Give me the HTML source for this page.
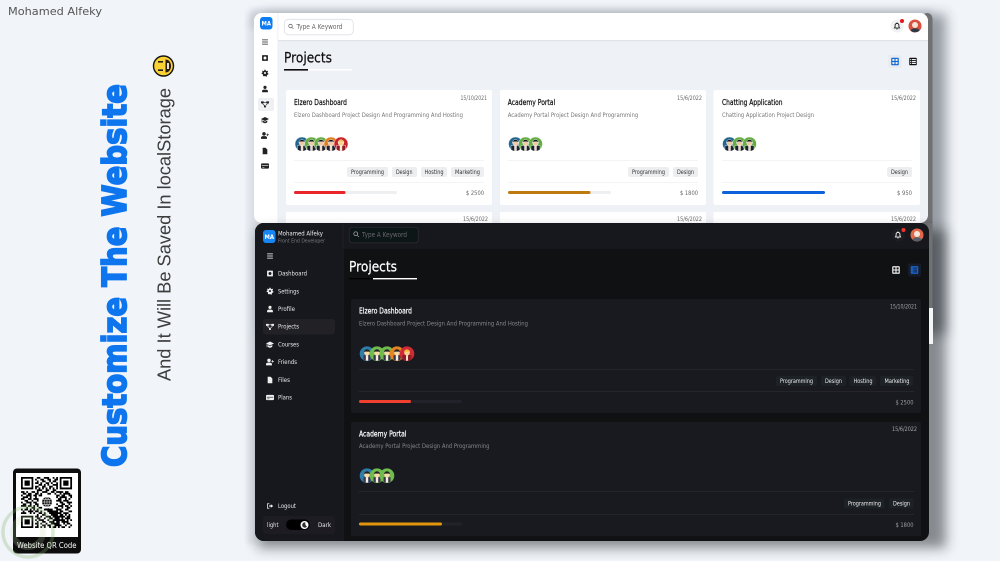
<!DOCTYPE html>
<html lang="en">
<head>
<meta charset="utf-8">
<title>Customize The Website</title>
<style>
html,body{margin:0;padding:0;background:#f1f4f9;width:1000px;height:561px;overflow:hidden}
svg{display:block;font-family:"DejaVu Sans","Liberation Sans",sans-serif}
.b{font-weight:bold}
.s{stroke-width:.22px}
</style>
</head>
<body>
<svg width="1000" height="561" viewBox="0 0 1000 561" xmlns="http://www.w3.org/2000/svg">
<defs>
<filter id="s1" x="-20%" y="-20%" width="140%" height="140%"><feGaussianBlur stdDeviation="6"/></filter>
<filter id="s2" x="-20%" y="-20%" width="140%" height="140%"><feGaussianBlur stdDeviation="3"/></filter>
<filter id="soft" x="-2%" y="-2%" width="104%" height="104%"><feGaussianBlur stdDeviation="0.3"/></filter>
<clipPath id="av"><circle cx="0" cy="0" r="7"/></clipPath>
<clipPath id="lw"><rect x="254" y="13" width="674" height="210" rx="8"/></clipPath>
<clipPath id="dw"><rect x="255" y="223" width="674" height="318" rx="9"/></clipPath>
<symbol id="i-bars" viewBox="0 0 12 12"><path d="M1 1.800h10v1.300H1zM1 5.350h10v1.300H1zM1 8.900h10v1.300H1z"/></symbol>
<symbol id="i-dash" viewBox="0 0 12 12"><path fill-rule="evenodd" d="M2 1h8a1 1 0 0 1 1 1v8a1 1 0 0 1-1 1H2a1 1 0 0 1-1-1V2a1 1 0 0 1 1-1zM6 3.500a2.500 2.500 0 1 0 0 5 2.500 2.500 0 0 0 0-5z"/></symbol>
<symbol id="i-gear" viewBox="0 0 12 12"><path fill-rule="evenodd" d="M5 .5h2l.3 1.600 1.400.6L10 1.900l1.200 1.600-1 1.300.3 1.400 1.400.6-.4 2-1.600.1-.8 1.200.6 1.500-1.800 1-1.100-1.200H5.200L4.100 11.700l-1.800-1 .6-1.500-.8-1.200L.5 7.900l-.4-2 1.400-.6.3-1.400-1-1.300L2 1.900l1.300.8 1.400-.6zM6 4.300a1.700 1.700 0 1 0 0 3.400 1.700 1.700 0 0 0 0-3.400z"/></symbol>
<symbol id="i-user" viewBox="0 0 12 12"><circle cx="6" cy="3.200" r="2.700"/><path d="M1 11.500V9.600C1 8 2.500 7 4 7h4c1.500 0 3 1 3 2.600v1.900z"/></symbol>
<symbol id="i-proj" viewBox="0 0 12 12"><path d="M0 2h4v3H0zM8 2h4v3H8zM4.500 8h3v3h-3zM4 3h4v1H4zM2.500 5l3.500 3.500-.8.5L1.700 5.500zM9.500 5L6 8.500l.8.5 3.500-3.500z"/></symbol>
<symbol id="i-cap" viewBox="0 0 12 12"><path d="M6 1.500L12 4.500 6 7.500 0 4.500zM2.500 6.800L6 8.600l3.500-1.800v2.400C8.500 10.300 7.300 10.800 6 10.800s-2.500-.5-3.500-1.600zM1 5.500h.8V10H1z"/></symbol>
<symbol id="i-plus" viewBox="0 0 12 12"><circle cx="4.500" cy="3.500" r="2.600"/><path d="M0 11V9.500C0 8 1.300 7 2.700 7h3.600C7.700 7 9 8 9 9.500V11zM9.500 3h1v1.500H12v1h-1.500V7h-1V5.500H8v-1h1.500z"/></symbol>
<symbol id="i-file" viewBox="0 0 12 12"><path d="M2 .5h5l3 3v8H2z"/></symbol>
<symbol id="i-card" viewBox="0 0 12 12"><path fill-rule="evenodd" d="M1.500 2h9A1.500 1.500 0 0 1 12 3.500v5A1.500 1.500 0 0 1 10.500 10h-9A1.500 1.500 0 0 1 0 8.500v-5A1.500 1.500 0 0 1 1.500 2zM1 5v1h10V5zM2 7.600v.9h3v-.9z"/></symbol>
<symbol id="i-out" viewBox="0 0 12 12"><path d="M1 1.500h4v1.300H2.300v6.400H5v1.300H1zM7.500 3L11.500 6l-4 3V7H4.500V5h3z"/></symbol>
<symbol id="i-bell" viewBox="0 0 12 12"><path fill="none" stroke="currentColor" stroke-width="1.300" d="M2.200 9h7.600L8.900 7.500V5A2.900 2.900 0 0 0 3.100 5v2.500z"/><path d="M4.800 10h2.400a1.200 1.200 0 0 1-2.400 0zM5.500.5h1V2h-1z"/></symbol>
<symbol id="i-grid" viewBox="0 0 12 12"><path fill-rule="evenodd" d="M2 1h8a1 1 0 0 1 1 1v8a1 1 0 0 1-1 1H2a1 1 0 0 1-1-1V2a1 1 0 0 1 1-1zM2.500 2.500v2.800h2.800V2.500zM6.700 2.500v2.800h2.800V2.500zM2.500 6.700v2.800h2.800V6.700zM6.700 6.700v2.800h2.800V6.700z"/></symbol>
<symbol id="i-list" viewBox="0 0 12 12"><path fill-rule="evenodd" d="M2 1h8a1 1 0 0 1 1 1v8a1 1 0 0 1-1 1H2a1 1 0 0 1-1-1V2a1 1 0 0 1 1-1zM2.200 2.600v1.500h1.100V2.600zM4.300 2.600v1.500h5.500V2.600zM2.200 5.250v1.500h1.100v-1.500zM4.300 5.250v1.500h5.500v-1.500zM2.200 7.900v1.500h1.100V7.900zM4.300 7.900v1.500h5.500V7.900z"/></symbol>
<symbol id="i-search" viewBox="0 0 12 12"><circle cx="5" cy="5" r="3.500" fill="none" stroke="currentColor" stroke-width="1.300"/><path d="M7.500 8.300l.8-.8 3 3-.8.8z"/></symbol>
<g id="p" clip-path="url(#av)"><rect x="-4.500" y="1.500" width="9" height="6" fill="#1f2230"/><rect x="-1" y="1.500" width="2" height="6" fill="#f1d9c4"/><circle cx="0" cy="-1" r="2.800" fill="#f3c9a5"/><path d="M-3.200-1.200a3.200 3.200 0 0 1 6.400 0l-1.200-1H-2z" fill="#14141c"/></g>
<g id="pd" clip-path="url(#av)"><rect x="-3.500" y="1.500" width="7" height="6" fill="#3b3648"/><rect x="-1.200" y="1.500" width="2.400" height="6" fill="#f5efe6"/><circle cx="0" cy="-1" r="2.800" fill="#f7d9a8"/><path d="M-3-1.500a3 3 0 0 1 6 0l-1-.6H-2z" fill="#222"/></g>
<g id="pr" clip-path="url(#av)"><rect x="-4.500" y="1.500" width="9" height="6" fill="#8e1a22"/><rect x="-1" y="1.500" width="2" height="6" fill="#f5e5d5"/><circle cx="0" cy="-1" r="2.800" fill="#f7d38f"/><path d="M-3-1.300a3 3 0 0 1 6 0l-1-.8H-2z" fill="#f0b93a"/></g>
</defs>

<rect width="1000" height="561" fill="#f1f4f9"/>

<!-- left captions -->
<g filter="url(#soft)">
<text x="8" y="15" font-size="11" fill="#555" textLength="94" lengthAdjust="spacingAndGlyphs">Mohamed Alfeky</text>
<g transform="translate(126,467) rotate(-90)"><text x="0" y="0" font-size="33" class="b" fill="#0d74ee" stroke="#0d74ee" stroke-width="1.700" textLength="383" lengthAdjust="spacingAndGlyphs">Customize The Website</text></g>
<g transform="translate(170.500,381) rotate(-90)"><text x="0" y="0" font-size="18" fill="#3c3c3c" font-family="Liberation Sans, sans-serif" textLength="293" lengthAdjust="spacingAndGlyphs">And It Will Be Saved In localStorage</text></g>
</g>
<!-- emoji -->
<circle cx="163.500" cy="66" r="10" fill="#fbd234" stroke="#111" stroke-width="1.400"/>
<path d="M158 61h5v1.600h-5zM158 69.400h5v1.600h-5z" fill="#222"/>
<path d="M165.500 59.500c3.500 0 5.500 3 5.500 6.500s-2 6.500-5.500 6.500z" fill="#2a1a14"/>
<path d="M167 63h2v6h-2z" fill="#e8e0d0"/>

<!-- QR -->
<g filter="url(#soft)">
<rect x="13" y="468.500" width="68" height="85" rx="4" fill="#0b0b0d"/>
<rect x="16" y="473" width="62" height="64" fill="#fff"/>
<g transform="translate(21,477) scale(1.760)" fill="none" stroke="#000" stroke-width="1">
<path d="M0 .5h7M9 .5h2M13 .5h3M18 .5h1M20 .5h1M22 .5h7
M0 1.500h1M6 1.500h1M8 1.500h1M11 1.500h2M15 1.500h2M19 1.500h2M22 1.500h1M28 1.500h1
M0 2.500h1M2 2.500h3M6 2.500h1M9 2.500h1M12 2.500h2M16 2.500h1M18 2.500h2M22 2.500h1M24 2.500h3M28 2.500h1
M0 3.500h1M2 3.500h3M6 3.500h1M8 3.500h2M11 3.500h1M14 3.500h2M17 3.500h1M20 3.500h1M22 3.500h1M24 3.500h3M28 3.500h1
M0 4.500h1M2 4.500h3M6 4.500h1M10 4.500h2M13 4.500h1M15 4.500h1M18 4.500h3M22 4.500h1M24 4.500h3M28 4.500h1
M0 5.500h1M6 5.500h1M8 5.500h2M12 5.500h2M16 5.500h2M20 5.500h1M22 5.500h1M28 5.500h1
M0 6.500h7M8 6.500h1M10 6.500h1M12 6.500h1M14 6.500h1M16 6.500h1M18 6.500h1M20 6.500h1M22 6.500h7
M9 7.500h3M14 7.500h2M18 7.500h2
M0 8.500h2M3 8.500h1M6 8.500h2M9 8.500h1M12 8.500h3M17 8.500h2M20 8.500h4M25 8.500h2
M1 9.500h2M4 9.500h2M8 9.500h2M11 9.500h1M15 9.500h2M19 9.500h1M22 9.500h1M24 9.500h4
M0 10.500h1M3 10.500h3M7 10.500h2M10 10.500h2M20 10.500h2M23 10.500h2M27 10.500h2
M1 11.500h3M5 11.500h1M8 11.500h1M20 11.500h1M22 11.500h4M28 11.500h1
M0 12.500h2M4 12.500h2M7 12.500h3M21 12.500h2M25 12.500h1M27 12.500h1
M2 13.500h2M6 13.500h1M9 13.500h1M20 13.500h3M24 13.500h3
M0 14.500h1M3 14.500h3M7 14.500h2M22 14.500h2M26 14.500h3
M1 15.500h2M5 15.500h1M8 15.500h2M20 15.500h1M23 15.500h2M27 15.500h1
M0 16.500h3M4 16.500h2M7 16.500h1M9 16.500h1M21 16.500h3M25 16.500h2M28 16.500h1
M3 17.500h1M6 17.500h2M10 17.500h2M14 17.500h2M19 17.500h2M23 17.500h1M26 17.500h2
M0 18.500h1M2 18.500h2M5 18.500h1M7 18.500h1M9 18.500h1M13 18.500h5M20 18.500h3M25 18.500h2
M1 19.500h1M4 19.500h3M8 19.500h2M11 19.500h1M15 19.500h6M22 19.500h2M27 19.500h2
M0 20.500h3M5 20.500h1M7 20.500h1M10 20.500h2M13 20.500h1M16 20.500h7M24 20.500h3
M9 21.500h1M12 21.500h2M17 21.500h4M22 21.500h2M25 21.500h1M27 21.500h1
M0 22.500h7M8 22.500h2M11 22.500h1M14 22.500h3M18 22.500h7M26 22.500h2
M0 23.500h1M6 23.500h1M9 23.500h2M13 23.500h1M16 23.500h2M19 23.500h3M23 23.500h1M25 23.500h3
M0 24.500h1M2 24.500h3M6 24.500h1M8 24.500h1M10 24.500h3M15 24.500h1M18 24.500h7M26 24.500h1M28 24.500h1
M0 25.500h1M2 25.500h3M6 25.500h1M9 25.500h1M12 25.500h2M16 25.500h3M20 25.500h2M23 25.500h4
M0 26.500h1M2 26.500h3M6 26.500h1M8 26.500h2M11 26.500h1M14 26.500h1M17 26.500h5M24 26.500h1M26 26.500h2
M0 27.500h1M6 27.500h1M9 27.500h1M12 27.500h2M15 27.500h2M19 27.500h4M25 27.500h1M28 27.500h1
M0 28.500h7M8 28.500h2M11 28.500h1M13 28.500h1M16 28.500h1M18 28.500h2M21 28.500h1M23 28.500h2M27 28.500h1"/>
</g>
<circle cx="47" cy="502" r="6.500" fill="#fff"/>
<circle cx="47" cy="502" r="5" fill="#111"/>
<path d="M42 502h10M47 497v10M43 499.500h8M43 504.500h8" stroke="#fff" stroke-width=".5" fill="none"/>
<ellipse cx="47" cy="502" rx="2.300" ry="5" stroke="#fff" stroke-width=".5" fill="none"/>
<text x="17" y="548" font-size="7.500" fill="#fff" textLength="59.500" lengthAdjust="spacingAndGlyphs">Website QR Code</text>
</g>
<!-- watermark ring -->
<circle cx="28" cy="532" r="25" fill="none" stroke="#7fb069" stroke-width="3.500" opacity=".28"/>
<circle cx="28" cy="532" r="15" fill="none" stroke="#bcd8a8" stroke-width="6" opacity=".2"/>

<!-- LIGHT WINDOW shadow -->
<rect x="262" y="14" width="684" height="320" fill="#27303a" opacity=".45" filter="url(#s1)"/>
<rect x="250" y="9" width="682" height="20" fill="#99a3ad" opacity=".3" filter="url(#s2)"/>
<rect x="247" y="14" width="12" height="530" fill="#a9b2bb" opacity=".25" filter="url(#s2)"/>
<!-- scrollbar strip -->
<rect x="922" y="13" width="10.500" height="295" rx="6" fill="#6f7173"/>

<g clip-path="url(#lw)">
<rect x="254" y="13" width="674" height="210" fill="#eef1f6"/>
<rect x="254" y="13" width="24" height="210" fill="#fff"/>
<rect x="254" y="13" width="674" height="27" fill="#fff"/>
<rect x="278" y="40" width="650" height="1.200" fill="#dfe2e6"/>
<rect x="277.500" y="13" width=".8" height="210" fill="#e9ecf0"/>
</g>

<g filter="url(#soft)">
<rect x="260" y="17" width="12.500" height="12.500" rx="3" fill="#0d7cf2"/>
<text x="261.500" y="25.500" font-size="6" class="b" fill="#fff" textLength="9.500" lengthAdjust="spacingAndGlyphs">MA</text>
<rect x="284.300" y="19.300" width="69" height="15.500" rx="4" fill="#fff" stroke="#dcdfe3" stroke-width=".8"/>
<use href="#i-search" x="288" y="23.500" width="6" height="6" fill="#555" color="#555"/>
<text x="296.500" y="29" font-size="7" fill="#666" textLength="46" lengthAdjust="spacingAndGlyphs">Type A Keyword</text>

<rect x="258" y="98" width="16" height="13" rx="2" fill="#eef0f3"/>
<g fill="#222" color="#222">
<use href="#i-bars" x="261.500" y="38.500" width="7" height="7"/>
<use href="#i-dash" x="261.500" y="54.500" width="7" height="7"/>
<use href="#i-gear" x="261.500" y="69.500" width="7" height="7"/>
<use href="#i-user" x="261.500" y="85.500" width="7" height="7"/>
<use href="#i-proj" x="261" y="100" width="8" height="8"/>
<use href="#i-cap" x="261" y="116" width="8" height="8"/>
<use href="#i-plus" x="261" y="131.500" width="8" height="8"/>
<use href="#i-file" x="261.500" y="147.500" width="7" height="7"/>
<use href="#i-card" x="261" y="162" width="8" height="8"/>
</g>

<text x="284" y="62.500" font-size="14.500" fill="#111" stroke="#111" class="s" textLength="48" lengthAdjust="spacingAndGlyphs">Projects</text>
<rect x="284" y="69" width="24" height="1.600" fill="#111"/>
<rect x="308" y="69" width="44" height="1.600" fill="#fff"/>

<circle cx="897" cy="26" r="6.500" fill="#f0f1f2"/>
<use href="#i-bell" x="893" y="22" width="8" height="8" fill="#111" color="#111"/>
<circle cx="902" cy="21" r="2" fill="#e8141c"/>
<circle cx="915" cy="26" r="6.500" fill="#d9503f"/>
<circle cx="915" cy="25" r="3" fill="#f6e3d4"/>
<path d="M910.500 30.500a5 4 0 0 1 9 0a6.500 6.500 0 0 1-9 0z" fill="#2b3a44"/>

<rect x="888.500" y="55" width="13" height="13" rx="2" fill="#e7ebf2"/>
<use href="#i-grid" x="890.500" y="57" width="9" height="9" fill="#0b63ce"/>
<use href="#i-list" x="908.500" y="57" width="9" height="9" fill="#111"/>

<!-- light cards row 1 -->
<g fill="#fff">
<rect x="286" y="90" width="206" height="115" rx="2"/>
<rect x="500" y="90" width="206" height="115" rx="2"/>
<rect x="713.500" y="90" width="206.500" height="115" rx="2"/>
<rect x="286" y="212" width="206" height="11"/>
<rect x="500" y="212" width="206" height="11"/>
<rect x="713.500" y="212" width="206.500" height="11"/>
</g>
<g font-size="5.800" fill="#666">
<text x="460.500" y="100" textLength="26.500" lengthAdjust="spacingAndGlyphs">15/10/2021</text>
<text x="677" y="100" textLength="25" lengthAdjust="spacingAndGlyphs">15/6/2022</text>
<text x="891" y="100" textLength="25" lengthAdjust="spacingAndGlyphs">15/6/2022</text>
<text x="463" y="221" textLength="25" lengthAdjust="spacingAndGlyphs">15/6/2022</text>
<text x="677" y="221" textLength="25" lengthAdjust="spacingAndGlyphs">15/6/2022</text>
<text x="891" y="221" textLength="25" lengthAdjust="spacingAndGlyphs">15/6/2022</text>
</g>
<g font-size="7.500" fill="#111" stroke="#111" class="s">
<text x="294" y="105" textLength="53" lengthAdjust="spacingAndGlyphs">Elzero Dashboard</text>
<text x="507.700" y="105" textLength="47.500" lengthAdjust="spacingAndGlyphs">Academy Portal</text>
<text x="722" y="105" textLength="60.500" lengthAdjust="spacingAndGlyphs">Chatting Application</text>
</g>
<g font-size="6.200" fill="#777">
<text x="294" y="117" textLength="169" lengthAdjust="spacingAndGlyphs">Elzero Dashboard Project Design And Programming And Hosting</text>
<text x="507.700" y="117" textLength="130.500" lengthAdjust="spacingAndGlyphs">Academy Portal Project Design And Programming</text>
<text x="722" y="117" textLength="92" lengthAdjust="spacingAndGlyphs">Chatting Application Project Design</text>
</g>
<!-- light avatars -->
<g stroke="#fff" stroke-width=".4">
<circle cx="302" cy="144" r="7" fill="#24668f"/><use href="#p" x="302" y="144"/>
<circle cx="311.500" cy="144" r="7" fill="#63ad43"/><use href="#p" x="311.500" y="144"/>
<circle cx="321" cy="144" r="7" fill="#63ad43"/><use href="#p" x="321" y="144"/>
<circle cx="331" cy="144" r="7" fill="#e27d20"/><use href="#p" x="331" y="144"/>
<circle cx="341" cy="144" r="7" fill="#c8232c"/><use href="#pr" x="341" y="144"/>
<circle cx="515.500" cy="144" r="7" fill="#24668f"/><use href="#p" x="515.500" y="144"/>
<circle cx="525.500" cy="144" r="7" fill="#63ad43"/><use href="#p" x="525.500" y="144"/>
<circle cx="535.500" cy="144" r="7" fill="#63ad43"/><use href="#p" x="535.500" y="144"/>
<circle cx="729.500" cy="144" r="7" fill="#24668f"/><use href="#p" x="729.500" y="144"/>
<circle cx="739.500" cy="144" r="7" fill="#63ad43"/><use href="#p" x="739.500" y="144"/>
<circle cx="749.500" cy="144" r="7" fill="#63ad43"/><use href="#p" x="749.500" y="144"/>
</g>
<g fill="#eef0f2">
<rect x="294" y="160" width="190" height=".7"/><rect x="294" y="182" width="190" height=".7"/>
<rect x="508" y="160" width="190" height=".7"/><rect x="508" y="182" width="190" height=".7"/>
<rect x="722" y="160" width="190" height=".7"/><rect x="722" y="182" width="190" height=".7"/>
</g>
<g fill="#eceef0">
<rect x="347" y="167" width="41" height="10" rx="2"/><rect x="392" y="167" width="25" height="10" rx="2"/><rect x="421" y="167" width="26" height="10" rx="2"/><rect x="451" y="167" width="33" height="10" rx="2"/>
<rect x="628" y="167" width="41" height="10" rx="2"/><rect x="673" y="167" width="25" height="10" rx="2"/>
<rect x="887" y="167" width="25" height="10" rx="2"/>
</g>
<g font-size="5.800" fill="#333">
<text x="351" y="174" textLength="33" lengthAdjust="spacingAndGlyphs">Programming</text>
<text x="396" y="174" textLength="16.500" lengthAdjust="spacingAndGlyphs">Design</text>
<text x="424.500" y="174" textLength="19" lengthAdjust="spacingAndGlyphs">Hosting</text>
<text x="455" y="174" textLength="25" lengthAdjust="spacingAndGlyphs">Marketing</text>
<text x="632" y="174" textLength="33" lengthAdjust="spacingAndGlyphs">Programming</text>
<text x="677" y="174" textLength="17" lengthAdjust="spacingAndGlyphs">Design</text>
<text x="891" y="174" textLength="17" lengthAdjust="spacingAndGlyphs">Design</text>
</g>
<g fill="#eeeff1">
<rect x="294" y="191" width="103" height="3" rx="1.500"/>
<rect x="508" y="191" width="103" height="3" rx="1.500"/>
<rect x="722" y="191" width="103" height="3" rx="1.500"/>
</g>
<rect x="294" y="191" width="51.500" height="3" rx="1.500" fill="#e8262c"/>
<rect x="508" y="191" width="82.500" height="3" rx="1.500" fill="#bf7a0e"/>
<rect x="722" y="191" width="103" height="3" rx="1.500" fill="#0c62dc"/>
<g font-size="6.500" fill="#666">
<text x="466" y="195" textLength="18" lengthAdjust="spacingAndGlyphs">$ 2500</text>
<text x="680" y="195" textLength="18" lengthAdjust="spacingAndGlyphs">$ 1800</text>
<text x="897" y="195" textLength="15" lengthAdjust="spacingAndGlyphs">$ 950</text>
</g>
</g>

<!-- DARK WINDOW shadow -->
<rect x="258" y="230" width="688" height="318" fill="#1a2128" opacity=".5" filter="url(#s1)"/>
<rect x="927.500" y="223" width="5" height="85" fill="#6f7173"/>
<rect x="928" y="308" width="5" height="36" fill="#f4f5f6"/>

<g clip-path="url(#dw)">
<rect x="255" y="223" width="674" height="318" fill="#101113"/>
<rect x="255" y="223" width="88" height="318" fill="#17181d"/>
<rect x="255" y="223" width="674" height="26" fill="#17181d"/>
<rect x="342.700" y="223" width=".7" height="318" fill="#23242a"/>
<rect x="351" y="299" width="570" height="114" rx="2" fill="#191a20"/>
<rect x="351" y="422" width="570" height="114" rx="2" fill="#191a20"/>
</g>

<g filter="url(#soft)">
<rect x="263" y="230" width="12.500" height="13" rx="3" fill="#1886f5"/>
<text x="264.500" y="239" font-size="6" class="b" fill="#fff" textLength="9.500" lengthAdjust="spacingAndGlyphs">MA</text>
<text x="278" y="235.500" font-size="6.500" fill="#eee" textLength="45" lengthAdjust="spacingAndGlyphs">Mohamed Alfeky</text>
<text x="278" y="242.500" font-size="5.500" fill="#787a80" textLength="47" lengthAdjust="spacingAndGlyphs">Front End Developer</text>
<rect x="349.300" y="227.300" width="69" height="15.500" rx="3" fill="#111214" stroke="#2a2b31" stroke-width=".8"/>
<use href="#i-search" x="353" y="231" width="6.500" height="6.500" fill="#bbb" color="#bbb"/>
<text x="362" y="237" font-size="7" fill="#666a70" textLength="45" lengthAdjust="spacingAndGlyphs">Type A Keyword</text>

<use href="#i-bars" x="266.500" y="252.500" width="7" height="7" fill="#fff"/>
<rect x="263" y="319" width="72" height="15.500" rx="3" fill="#212228"/>
<g fill="#eee">
<use href="#i-dash" x="266.500" y="270" width="7" height="7"/>
<use href="#i-gear" x="266.500" y="287.500" width="7" height="7"/>
<use href="#i-user" x="266.500" y="305.500" width="7" height="7"/>
<use href="#i-proj" x="266" y="322.500" width="8" height="8"/>
<use href="#i-cap" x="266" y="340.500" width="8" height="8"/>
<use href="#i-plus" x="266" y="358" width="8" height="8"/>
<use href="#i-file" x="266.500" y="376.500" width="7" height="7"/>
<use href="#i-card" x="266" y="393.500" width="8" height="8"/>
<use href="#i-out" x="266.500" y="502.500" width="7" height="7"/>
</g>
<g font-size="6" fill="#e8e8ea">
<text x="278" y="275.700" textLength="29" lengthAdjust="spacingAndGlyphs">Dashboard</text>
<text x="278" y="293.300" textLength="21" lengthAdjust="spacingAndGlyphs">Settings</text>
<text x="278" y="311" textLength="17" lengthAdjust="spacingAndGlyphs">Profile</text>
<text x="278" y="328.700" textLength="21" lengthAdjust="spacingAndGlyphs">Projects</text>
<text x="278" y="346.500" textLength="21" lengthAdjust="spacingAndGlyphs">Courses</text>
<text x="278" y="364" textLength="19" lengthAdjust="spacingAndGlyphs">Friends</text>
<text x="278" y="382" textLength="12" lengthAdjust="spacingAndGlyphs">Files</text>
<text x="278" y="399.700" textLength="14" lengthAdjust="spacingAndGlyphs">Plans</text>
<text x="278" y="508" textLength="18" lengthAdjust="spacingAndGlyphs">Logout</text>
</g>
<rect x="263" y="516" width="72" height="18" rx="3" fill="#1d1e23"/>
<text x="267" y="527" font-size="6" fill="#e8e8ea" textLength="11.500" lengthAdjust="spacingAndGlyphs">light</text>
<text x="318" y="527" font-size="6" fill="#e8e8ea" textLength="13" lengthAdjust="spacingAndGlyphs">Dark</text>
<rect x="286" y="519.500" width="24" height="10.500" rx="5.200" fill="#000"/>
<circle cx="304.500" cy="525" r="4" fill="#fff"/>
<path d="M305.500 522.500a2.600 2.600 0 1 0 1.500 3.900 3 3 0 0 1-1.500-3.900z" fill="#333"/>

<text x="349" y="271.500" font-size="14.500" fill="#fff" stroke="#fff" class="s" textLength="48" lengthAdjust="spacingAndGlyphs">Projects</text>
<rect x="349" y="278" width="24" height="1.400" fill="#000"/>
<rect x="373" y="278" width="44" height="1.400" fill="#fff"/>

<circle cx="898" cy="235" r="6.500" fill="#1d1e23"/>
<use href="#i-bell" x="894" y="231" width="8" height="8" fill="#fff" color="#fff"/>
<circle cx="903.500" cy="230" r="2" fill="#f0342e"/>
<circle cx="917" cy="235" r="6.500" fill="#e2684e"/>
<circle cx="917" cy="234" r="3" fill="#f8e6d8"/>
<path d="M912.500 239.500a5 4 0 0 1 9 0a6.500 6.500 0 0 1-9 0z" fill="#51606a"/>

<use href="#i-grid" x="891.500" y="265.500" width="9" height="9" fill="#fff"/>
<rect x="908" y="263.500" width="13" height="13" rx="2" fill="#191d29"/>
<use href="#i-list" x="910" y="265.500" width="9" height="9" fill="#1a6fe8"/>

<g font-size="6" fill="#a5a6aa">
<text x="890" y="308.700" textLength="27" lengthAdjust="spacingAndGlyphs">15/10/2021</text>
<text x="892" y="431" textLength="25" lengthAdjust="spacingAndGlyphs">15/6/2022</text>
</g>
<g font-size="7.500" fill="#fff" stroke="#fff" class="s">
<text x="359" y="313.700" textLength="53" lengthAdjust="spacingAndGlyphs">Elzero Dashboard</text>
<text x="359" y="436.300" textLength="47.500" lengthAdjust="spacingAndGlyphs">Academy Portal</text>
</g>
<g font-size="6.200" fill="#85868b">
<text x="359" y="325.700" textLength="169" lengthAdjust="spacingAndGlyphs">Elzero Dashboard Project Design And Programming And Hosting</text>
<text x="359" y="448" textLength="130.500" lengthAdjust="spacingAndGlyphs">Academy Portal Project Design And Programming</text>
</g>
<g>
<circle cx="367" cy="353.700" r="7.300" fill="#2f7ca8"/><use href="#pd" x="367" y="353.700"/>
<circle cx="377" cy="353.700" r="7.300" fill="#6fbb4d"/><use href="#pd" x="377" y="353.700"/>
<circle cx="387" cy="353.700" r="7.300" fill="#6fbb4d"/><use href="#pd" x="387" y="353.700"/>
<circle cx="397" cy="353.700" r="7.300" fill="#e58524"/><use href="#pd" x="397" y="353.700"/>
<circle cx="407" cy="353.700" r="7.300" fill="#cf2c34"/><use href="#pr" x="407" y="353.700"/>
<circle cx="367" cy="475.700" r="7.300" fill="#2f7ca8"/><use href="#pd" x="367" y="475.700"/>
<circle cx="377" cy="475.700" r="7.300" fill="#6fbb4d"/><use href="#pd" x="377" y="475.700"/>
<circle cx="387" cy="475.700" r="7.300" fill="#6fbb4d"/><use href="#pd" x="387" y="475.700"/>
</g>
<g fill="#2a2b30">
<rect x="359" y="369.300" width="555" height=".7"/><rect x="359" y="391.200" width="555" height=".7"/>
<rect x="359" y="491.200" width="555" height=".7"/><rect x="359" y="514" width="555" height=".7"/>
</g>
<g fill="#1f2026">
<rect x="776" y="376" width="41" height="10" rx="2"/><rect x="821" y="376" width="25" height="10" rx="2"/><rect x="849.500" y="376" width="26.500" height="10" rx="2"/><rect x="880" y="376" width="33" height="10" rx="2"/>
<rect x="844" y="498.500" width="40.500" height="10" rx="2"/><rect x="889" y="498.500" width="24.500" height="10" rx="2"/>
</g>
<g font-size="5.800" fill="#f0f0f0">
<text x="780" y="383" textLength="33" lengthAdjust="spacingAndGlyphs">Programming</text>
<text x="825" y="383" textLength="17" lengthAdjust="spacingAndGlyphs">Design</text>
<text x="853.500" y="383" textLength="19" lengthAdjust="spacingAndGlyphs">Hosting</text>
<text x="884.500" y="383" textLength="25" lengthAdjust="spacingAndGlyphs">Marketing</text>
<text x="848" y="505.500" textLength="33" lengthAdjust="spacingAndGlyphs">Programming</text>
<text x="893" y="505.500" textLength="17" lengthAdjust="spacingAndGlyphs">Design</text>
</g>
<rect x="359" y="400" width="103" height="3" rx="1.500" fill="#232429"/>
<rect x="359" y="400" width="52" height="3" rx="1.500" fill="#f2402f"/>
<rect x="359" y="522.500" width="103" height="3" rx="1.500" fill="#232429"/>
<rect x="359" y="522.500" width="83" height="3" rx="1.500" fill="#e2960f"/>
<g font-size="6.500" fill="#9c9da1">
<text x="895.500" y="404.500" textLength="18" lengthAdjust="spacingAndGlyphs">$ 2500</text>
<text x="895.500" y="527" textLength="18" lengthAdjust="spacingAndGlyphs">$ 1800</text>
</g>
</g>
</svg>
</body>
</html>
